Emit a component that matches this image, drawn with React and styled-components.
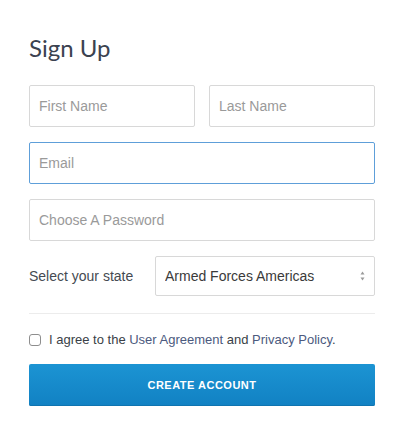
import styled, { createGlobalStyle } from "styled-components"

const Global = createGlobalStyle`
  body {
    margin: 0;
    background: #fff;
    font-family: "Liberation Sans", Arial, sans-serif;
  }
`

const Page = styled.div`
  padding: 35px 0 0 29px;
  width: 346px;
`
const Title = styled.h1`
  margin: 0 0 24px;
  font-family: Lato, "Open Sans", sans-serif;
  font-weight: 400;
  font-size: 24px;
  line-height: 26px;
  color: #3b4250;
`
const Form = styled.form`
  display: flex;
  flex-direction: column;
  gap: 15px;
`
const Row = styled.div`
  display: flex;
  gap: 14px;
  align-items: center;
`
const Input = styled.input`
  box-sizing: border-box;
  flex: 1;
  min-width: 0;
  height: 42px;
  padding: 0 9px;
  border: 1px solid ${props => props.focused ? "#5e9fd9" : "#d8d8d8"};
  border-radius: 2px;
  font-family: "Liberation Sans", Arial, sans-serif;
  font-size: 14px;
  color: #333;
  outline: none;
  &::placeholder {
    color: #9a9a9a;
  }
`
const Label = styled.label`
  width: 112px;
  font-size: 14px;
  color: #454a52;
`
const SelectBox = styled.div`
  position: relative;
  flex: 1;
  height: 40px;
`
const Select = styled.select`
  box-sizing: border-box;
  width: 100%;
  height: 40px;
  padding: 0 9px;
  appearance: none;
  background: #fff;
  border: 1px solid #d8d8d8;
  border-radius: 2px;
  font-family: "Liberation Sans", Arial, sans-serif;
  font-size: 14px;
  color: #3a3a3a;
  outline: none;
`
const Arrows = styled.svg`
  position: absolute;
  right: 10px;
  top: 15px;
  pointer-events: none;
`
const Divider = styled.hr`
  margin: 2px 0 0;
  border: 0;
  border-top: 1px solid #ececec;
`
const Agree = styled.div`
  display: flex;
  align-items: center;
  gap: 8px;
  margin-top: 3px;
  font-size: 13px;
  color: #3a3f47;
`
const Check = styled.span`
  box-sizing: border-box;
  width: 12px;
  height: 12px;
  border: 1px solid #8e8e8e;
  border-radius: 3px;
  background: #fff;
`
const Link = styled.a`
  color: #4c5a7e;
  text-decoration: none;
`
const Button = styled.button`
  margin-top: 2px;
  height: 42px;
  border: 0;
  border-radius: 2px;
  background: linear-gradient(#1c94d3, #1181c3);
  box-shadow: inset 0 -1px 0 #0f74b0;
  color: #fff;
  font-family: "Liberation Sans", Arial, sans-serif;
  font-size: 11px;
  font-weight: 700;
  letter-spacing: 0.5px;
  text-transform: uppercase;
`

export default function App() {
  return (
    <Page>
      <Global />
      <Title>Sign Up</Title>
      <Form onSubmit={e => e.preventDefault()}>
        <Row>
          <Input placeholder="First Name" />
          <Input placeholder="Last Name" />
        </Row>
        <Row>
          <Input placeholder="Email" focused />
        </Row>
        <Row>
          <Input placeholder="Choose A Password" type="password" />
        </Row>
        <Row>
          <Label>Select your state</Label>
          <SelectBox>
            <Select defaultValue="AA">
              <option value="AA">Armed Forces Americas</option>
              <option value="AE">Armed Forces Europe</option>
              <option value="AP">Armed Forces Pacific</option>
            </Select>
            <Arrows width="5" height="10" viewBox="0 0 5 10">
              <path d="M2.5 0.5 L4.5 3.5 L0.5 3.5 Z" fill="#9a9a9a" />
              <path d="M2.5 9.5 L4.5 6.5 L0.5 6.5 Z" fill="#9a9a9a" />
            </Arrows>
          </SelectBox>
        </Row>
        <Divider />
        <Agree>
          <Check />
          <span>
            I agree to the <Link href="#">User Agreement</Link> and <Link href="#">Privacy Policy</Link>.
          </span>
        </Agree>
        <Button type="submit">Create Account</Button>
      </Form>
    </Page>
  )
}
